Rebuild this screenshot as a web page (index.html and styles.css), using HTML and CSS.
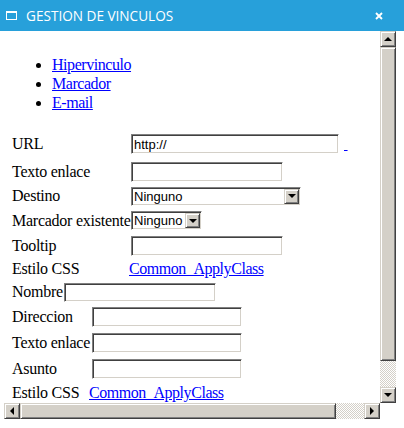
FILE: index.html
```html
<!DOCTYPE html>
<html lang="es">

<head>
    <meta charset="UTF-8">
    <meta name="viewport" content="width=device-width, initial-scale=1.0">
    <title>Gestion de vinculos</title>
    <link rel="stylesheet" href="styles.css">
</head>

<body>
    <div class="dialog">
        <div class="title-bar">
            <svg class="title-icon" viewBox="0 0 11 9" width="11" height="9">
                <rect x="0.5" y="0.5" width="10" height="8" fill="none" stroke="#fff" />
                <rect x="0" y="0" width="11" height="2" fill="#fff" />
            </svg>
            <span class="title-text">GESTION DE VINCULOS</span>
            <svg class="close-btn" viewBox="0 0 8 8" width="8" height="8">
                <path d="M1 1L7 7M7 1L1 7" stroke="#fff" stroke-width="1.9" />
            </svg>
        </div>

        <div class="dialog-body">
            <div class="frame">
                <div class="page">
                    <ul class="link-types">
                        <li><a href="#">Hipervinculo</a></li>
                        <li><a href="#">Marcador</a></li>
                        <li><a href="#">E-mail</a></li>
                    </ul>

                    <!-- hipervinculo / marcador -->
                    <div class="form form-link">
                        <span class="lbl">URL</span>
                        <div class="field">
                            <input class="txt txt-url" type="text" value="http://">
                            <a href="#" class="blank-link">&nbsp;</a>
                        </div>
                        <span class="lbl">Texto enlace</span>
                        <div class="field"><input class="txt" type="text"></div>
                        <span class="lbl">Destino</span>
                        <div class="field">
                            <div class="combo combo-wide">
                                <select>
                                    <option>Ninguno</option>
                                </select>
                                <span class="combo-btn"><i class="arrow arrow-down"></i></span>
                            </div>
                        </div>
                        <span class="lbl">Marcador existente</span>
                        <div class="field">
                            <div class="combo combo-small">
                                <select>
                                    <option>Ninguno</option>
                                </select>
                                <span class="combo-btn"><i class="arrow arrow-down"></i></span>
                            </div>
                        </div>
                        <span class="lbl">Tooltip</span>
                        <div class="field"><input class="txt" type="text"></div>
                        <span class="lbl">Estilo CSS</span>
                        <div class="field"><a href="#">Common_ApplyClass</a></div>
                    </div>

                    <div class="name-row">
                        <span class="lbl">Nombre</span>
                        <input class="txt txt-name" type="text">
                    </div>

                    <!-- e-mail -->
                    <div class="form form-mail">
                        <span class="lbl">Direccion</span>
                        <div class="field"><input class="txt" type="text"></div>
                        <span class="lbl">Texto enlace</span>
                        <div class="field"><input class="txt" type="text"></div>
                        <span class="lbl">Asunto</span>
                        <div class="field"><input class="txt" type="text"></div>
                        <span class="lbl">Estilo CSS</span>
                        <div class="field"><a href="#">Common_ApplyClass</a></div>
                    </div>
                </div>

                <div class="vscroll">
                    <span class="sb-btn"><i class="arrow arrow-up"></i></span>
                    <span class="sb-thumb"></span>
                    <span class="sb-track"></span>
                    <span class="sb-btn"><i class="arrow arrow-down"></i></span>
                </div>
                <div class="hscroll">
                    <span class="sb-btn"><i class="arrow arrow-left"></i></span>
                    <span class="sb-thumb"></span>
                    <span class="sb-track"></span>
                    <span class="sb-btn"><i class="arrow arrow-right"></i></span>
                </div>
                <div class="corner"></div>
            </div>
        </div>
    </div>
</body>

</html>
```

FILE: styles.css
```css
body {
    margin: 0;
    background-color: #fff;
}

.dialog {
    display: flex;
    flex-direction: column;
    width: 404px;
    height: 428px;
}

.title-bar {
    display: flex;
    align-items: center;
    flex: none;
    height: 31px;
    padding: 0 21px 0 6px;
    background-color: #27a0da;
    color: #fff;
    font: 13.6px "Open Sans", sans-serif;
}

.title-icon {
    margin-right: 9px;
}

.close-btn {
    margin-left: auto;
}

.dialog-body {
    flex: 1;
    padding: 0 8px 9px 4px;
}

.frame {
    display: grid;
    grid-template-columns: 376px 16px;
    grid-template-rows: 372px 16px;
}

/* contenido de la pagina */
.page {
    overflow: hidden;
    padding: 8px;
    font: 16px "Liberation Serif", "Times New Roman", serif;
    letter-spacing: -0.25px;
    color: #000;
}

.page a {
    color: #00f;
    letter-spacing: -0.45px;
}

.link-types {
    margin: 16px 0;
    padding-left: 40px;
    line-height: 19px;
}

.lbl {
    white-space: nowrap;
}

.form {
    display: grid;
    align-items: center;
}

.form-link {
    grid-template-columns: 117px auto;
    grid-template-rows: 32px 24px 24px 25px 25px 22px;
}

.form-mail {
    grid-template-columns: 77px auto;
    grid-template-rows: 26px 26px 26px 22px;
}

.field {
    display: flex;
    align-items: center;
}

.name-row {
    display: flex;
    align-items: center;
    height: 24px;
}

/* cajas de texto estilo clasico */
.txt {
    box-sizing: border-box;
    width: 152px;
    height: 20px;
    margin: 0 0 0 2px;
    padding: 0 2px;
    border: 1px solid;
    border-color: #808080 #fff #fff #808080;
    box-shadow: inset 1px 1px #404040, inset -1px -1px #d4d0c8;
    background-color: #fff;
    font: 13px "Liberation Sans", Arial, sans-serif;
    letter-spacing: 0;
    color: #000;
    outline: none;
}

.txt-url {
    width: 208px;
}

.txt-name {
    height: 19px;
    margin-left: 1px;
}

.form-mail .txt {
    width: 150px;
    margin-left: 3px;
}

.blank-link {
    margin-left: 5px;
}

.combo {
    display: flex;
    box-sizing: border-box;
    height: 19px;
    margin-left: 2px;
    padding: 1px;
    border: 1px solid;
    border-color: #808080 #fff #fff #808080;
    box-shadow: inset 1px 1px #404040, inset -1px -1px #d4d0c8;
    background-color: #fff;
}

.combo-wide {
    width: 170px;
}

.combo-small {
    width: 71px;
}

.combo select {
    flex: 1;
    min-width: 0;
    padding: 0 0 0 1px;
    border: none;
    background: transparent;
    font: 13px "Liberation Sans", Arial, sans-serif;
    letter-spacing: 0;
    color: #000;
    appearance: none;
    -webkit-appearance: none;
    outline: none;
}

.combo-btn,
.sb-btn {
    display: flex;
    align-items: center;
    justify-content: center;
    flex: none;
    box-sizing: border-box;
    background-color: #d4d0c8;
    border: 1px solid;
    border-color: #d4d0c8 #404040 #404040 #d4d0c8;
    box-shadow: inset 1px 1px #fff, inset -1px -1px #808080;
}

.combo-btn {
    width: 15px;
}

/* flechas */
.arrow {
    width: 0;
    height: 0;
    border: 0 solid transparent;
}

.arrow-up {
    border-width: 0 4px 4px;
    border-bottom-color: #000;
}

.arrow-down {
    border-width: 4px 4px 0;
    border-top-color: #000;
}

.arrow-left {
    border-width: 4px 4px 4px 0;
    border-right-color: #000;
}

.arrow-right {
    border-width: 4px 0 4px 4px;
    border-left-color: #000;
}

/* barras de desplazamiento */
.vscroll,
.hscroll {
    display: flex;
}

.vscroll {
    flex-direction: column;
}

.sb-btn {
    width: 16px;
    height: 16px;
}

.sb-thumb {
    flex: none;
    box-sizing: border-box;
    background-color: #d4d0c8;
    border: 1px solid;
    border-color: #d4d0c8 #404040 #404040 #d4d0c8;
    box-shadow: inset 1px 1px #fff, inset -1px -1px #808080;
}

.vscroll .sb-thumb {
    height: 314px;
}

.hscroll .sb-thumb {
    width: 316px;
}

.sb-track {
    flex: 1;
    background: repeating-conic-gradient(#d4d0c8 0 25%, #fff 0 50%) 0 0 / 2px 2px;
}

.corner {
    background-color: #fff;
}
```
